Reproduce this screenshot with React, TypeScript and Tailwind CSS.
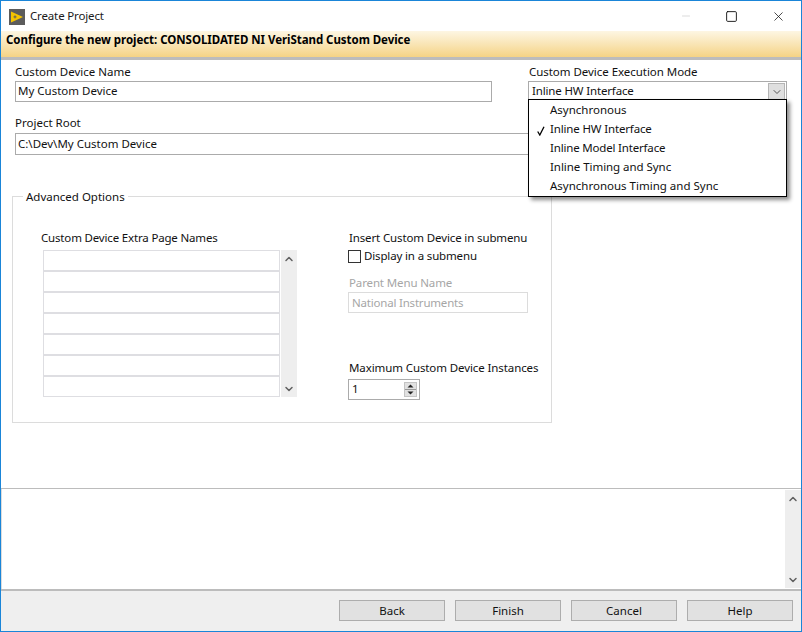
import { ChevronDown, ChevronUp, Minus, Square, X } from 'lucide-react';

const modes = [
  { label: 'Asynchronous', fit: '' },
  { label: 'Inline HW Interface', fit: 'tracking-[-0.15px]' },
  { label: 'Inline Model Interface', fit: 'tracking-[-0.18px]' },
  { label: 'Inline Timing and Sync', fit: 'tracking-[-0.05px]' },
  { label: 'Asynchronous Timing and Sync', fit: '' },
];

function ScrollBar({ className }: { className: string }) {
  return (
    <div className={`flex flex-col items-center justify-between bg-[#eeeeee] w-4 pt-[3px] pb-[2px] pr-px text-[#606060] ${className}`}>
      <ChevronUp size={12} strokeWidth={3} />
      <ChevronDown size={12} strokeWidth={3} />
    </div>
  );
}

export default function App() {
  return (
    <div className="w-[802px] h-[632px] flex flex-col overflow-hidden bg-white border border-[#1a85d8] text-[11.5px] leading-[16px] text-[#111111] font-['Noto_Sans','Open_Sans',sans-serif]">
      {/* Title bar */}
      <div className="h-[30px] flex items-center shrink-0">
        <svg width="16" height="16" viewBox="0 0 16 16" className="ml-[8px] mt-[1px]">
          <rect width="16" height="16" fill="#5c5c5c" />
          <path d="M2 2.5 L14 8 L2 13.5 Z" fill="#f5c400" />
          <path d="M4.5 7.9 h3 M6 6.4 v3" stroke="#5c5c5c" strokeWidth="1" />
        </svg>
        <span className="ml-[5px] text-[#1a1a1a] tracking-[-0.15px]">Create Project</span>
        <div className="ml-auto flex items-center">
          <Minus size={12} strokeWidth={1} className="text-[#b5b5b5] mr-[33px]" />
          <Square size={13} strokeWidth={1.7} className="text-[#111111] mr-[33px]" />
          <X size={15} strokeWidth={1.2} className="text-[#111111] mr-[15px]" />
        </div>
      </div>

      {/* Banner */}
      <div className="h-[26px] shrink-0 flex items-start pt-[1px] pl-[5px] bg-gradient-to-b from-[#fdf6e3] to-[#f5d384] font-bold text-black tracking-[-0.05px]">
        Configure the new project: CONSOLIDATED NI VeriStand Custom Device
      </div>
      <div className="h-[3px] shrink-0 bg-[#bcbcbc]" />

      {/* Form */}
      <div className="relative h-[428px] shrink-0 pl-[14px]">
        <div className="flex pt-[4px]">
          <div className="w-[477px] flex flex-col">
            <span className="h-[17px]">Custom Device Name</span>
            <div className="h-[21px] border border-[#ababab] px-[2px] pb-[2px] flex items-center">My Custom Device</div>
          </div>
          <div className="ml-[36px] w-[259px] flex flex-col">
            <span className="h-[17px] pl-[1px] tracking-[-0.04px]">Custom Device Execution Mode</span>
            <div className="h-[21px] border border-[#ababab] pl-[3px] pr-px pb-[2px] flex items-center justify-between tracking-[-0.15px]">
              Inline HW Interface
              <span className="self-start mt-px w-[17px] h-[17px] bg-[#dfdfdf] border border-[#b5b5b5] flex items-center justify-center">
                <ChevronDown size={12} className="text-[#555555]" />
              </span>
            </div>
          </div>
        </div>

        <div className="mt-[13px] flex flex-col w-[771px]">
          <span className="h-[18px]">Project Root</span>
          <div className="h-[22px] border border-[#ababab] px-[2px] flex items-center">C:\Dev\My Custom Device</div>
        </div>

        {/* Advanced Options group */}
        <fieldset className="mt-[33px] -ml-[3px] w-[540px] h-[235px] border border-[#dcdcdc]">
          <legend className="ml-[10px] px-[3px] h-[16px] pt-px">Advanced Options</legend>
          <div className="flex pl-[28px]">
            <div className="w-[306px] pt-[26px]">
              <div className="h-[20px] tracking-[-0.17px]">Custom Device Extra Page Names</div>
              <div className="flex pl-[2px]">
                <div className="w-[237px] flex flex-col">
                  {Array.from({ length: 7 }).map((_, i) => (
                    <div key={i} className="h-[21px] border border-[#dedee2]" />
                  ))}
                </div>
                <ScrollBar className="ml-px h-[147px]" />
              </div>
            </div>
            <div className="flex flex-col pt-[26px]">
              <span className="h-[17px] pl-[2px] tracking-[-0.13px]">Insert Custom Device in submenu</span>
              <label className="flex items-center h-[18px] ml-px">
                <span className="w-[13px] h-[13px] border border-[#333333]" />
                <span className="ml-[3px] tracking-[-0.15px]">Display in a submenu</span>
              </label>
              <span className="mt-[10px] h-[17px] pl-[2px] text-[#a6a6a6] tracking-[-0.13px]">Parent Menu Name</span>
              <div className="ml-px w-[180px] h-[21px] border border-[#dcdcdc] px-[3px] flex items-center text-[#a6a6a6] tracking-[-0.2px]">National Instruments</div>
              <span className="mt-[47px] h-[19px] pl-[2px] whitespace-nowrap tracking-[-0.1px]">Maximum Custom Device Instances</span>
              <div className="ml-px w-[72px] h-[21px] border border-[#ababab] pl-[3px] pr-[2px] flex items-center justify-between">
                <span className="mb-[2px]">1</span>
                <span className="w-[13px] h-[15px] flex flex-col border border-[#c4c4c4] bg-[#e1e1e1] text-[#222222]">
                  <svg viewBox="0 0 11 6" className="w-[11px] h-[6px]"><path d="M5.5 1.5 L8.5 4.5 H2.5 Z" fill="currentColor" /></svg>
                  <span className="h-px bg-[#999999]" />
                  <svg viewBox="0 0 11 6" className="w-[11px] h-[6px]"><path d="M2.5 1.5 H8.5 L5.5 4.5 Z" fill="currentColor" /></svg>
                </span>
              </div>
            </div>
          </div>
        </fieldset>

        {/* Open drop-down list */}
        <div className="absolute left-[527px] top-[39px] w-[259px] h-[98px] bg-white border border-black shadow-[3px_3px_4px_rgba(0,0,0,0.45)] flex flex-col">
          {modes.map((m, i) => (
            <div key={m.label} className={`h-[19px] flex items-center relative pl-[21px] ${m.fit}`}>
              {i === 1 && (
                <svg width="8" height="10" viewBox="0 0 8 10" className="absolute left-[8px] top-[7px]">
                  <path d="M0.7 5.5 L2.8 9 L7 0.7" fill="none" stroke="#000000" strokeWidth="1.3" />
                </svg>
              )}
              {m.label}
            </div>
          ))}
        </div>
      </div>

      {/* Log box */}
      <div className="h-px shrink-0 bg-[#bcbcbc]" />
      <div className="h-[100px] shrink-0 flex justify-end border-l border-[#dcdcdc] py-px">
        <ScrollBar className="mr-0" />
      </div>
      <div className="h-[2px] shrink-0 bg-[#bcbcbc]" />

      {/* Footer buttons */}
      <div className="flex-1 bg-[#efefef] flex items-start justify-end gap-[10px] pt-[9px] pr-[8px]">
        {['Back', 'Finish', 'Cancel', 'Help'].map((b) => (
          <button key={b} className="w-[106px] h-[21px] bg-[#e1e1e1] border border-[#adadad] flex items-center justify-center">
            {b}
          </button>
        ))}
      </div>
    </div>
  );
}
